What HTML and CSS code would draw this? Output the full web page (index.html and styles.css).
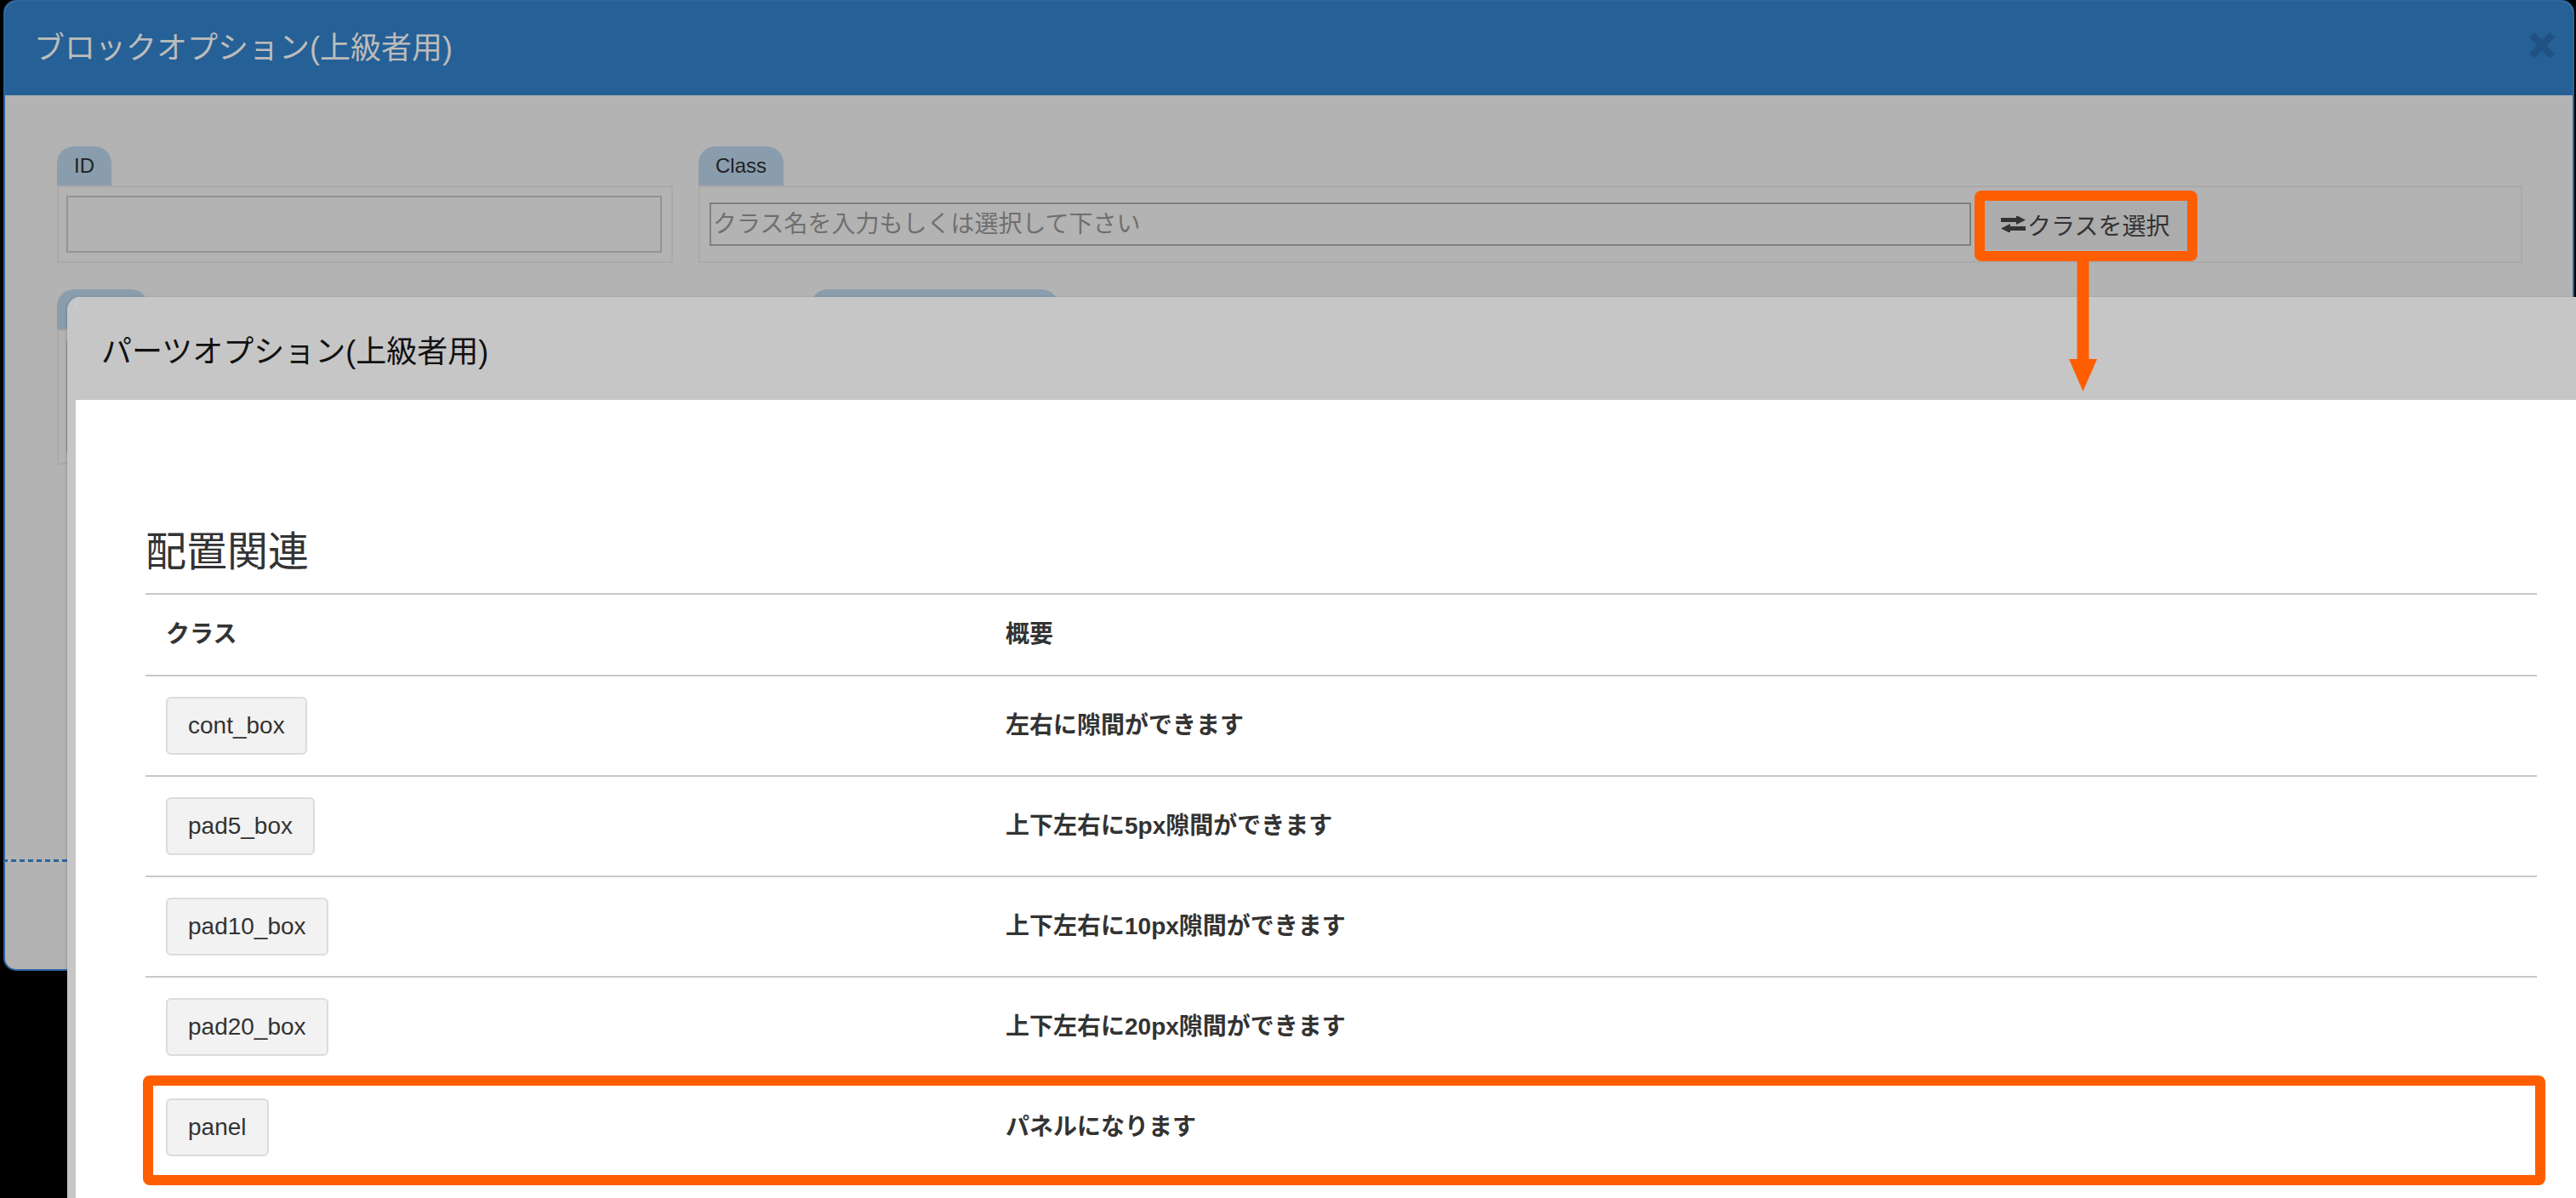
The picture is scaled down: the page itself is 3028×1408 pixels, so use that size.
FILE: index.html
```html
<!DOCTYPE html>
<html lang="ja">
<head>
    <meta charset="UTF-8">
    <meta name="viewport" content="width=device-width, initial-scale=1.0">
    <title>パーツオプション(上級者用)</title>
    <link rel="stylesheet" href="styles.css">
</head>
<body>

    <!-- Block option dialog (dimmed, behind) -->
    <div class="block-modal">
        <div class="block-modal-header">
            <h4 class="block-title">ブロックオプション(上級者用)</h4>
            <span class="close-btn">
                <svg width="32" height="33" viewBox="0 0 32 33">
                    <path d="M4 4 L28 29 M28 4 L4 29" stroke="#1f5283" stroke-width="8" fill="none"/>
                </svg>
            </span>
        </div>
        <div class="block-modal-body">
            <div class="field-row">
                <div class="field field-id">
                    <div class="field-tab">ID</div>
                    <div class="field-box">
                        <input type="text" class="text-input id-input">
                    </div>
                </div>
                <div class="field field-class">
                    <div class="field-tab">Class</div>
                    <div class="field-box">
                        <input type="text" class="text-input class-input" placeholder="クラス名を入力もしくは選択して下さい">
                        <button class="select-btn">
                            <svg width="29" height="19" viewBox="0 0 29 19">
                                <rect x="0" y="2" width="20" height="5" fill="#333"/>
                                <polygon points="18,-1 29,4.5 18,10" fill="#333"/>
                                <rect x="9" y="12" width="20" height="5" fill="#333"/>
                                <polygon points="11,9 0,14.5 11,20" fill="#333"/>
                            </svg>クラスを選択
                        </button>
                    </div>
                </div>
            </div>
            <div class="field-row row-2">
                <div class="field field-style">
                    <div class="field-tab tab-short"></div>
                    <div class="field-box tall-box">
                        <textarea class="text-input area-input"></textarea>
                    </div>
                </div>
                <div class="field field-attr">
                    <div class="field-tab tab-long"></div>
                    <div class="field-box tall-box"></div>
                </div>
            </div>
        </div>
        <div class="block-modal-footer"></div>
    </div>

    <!-- Parts option dialog (front) -->
    <div class="parts-modal">
        <div class="parts-modal-header">
            <h4 class="parts-title">パーツオプション(上級者用)</h4>
        </div>
        <div class="parts-modal-body">
            <h3 class="section-title">配置関連</h3>
            <table class="class-table">
                <colgroup>
                    <col class="col-class">
                    <col>
                </colgroup>
                <thead>
                    <tr><th>クラス</th><th>概要</th></tr>
                </thead>
                <tbody>
                    <tr><td><span class="class-tag">cont_box</span></td><td>左右に隙間ができます</td></tr>
                    <tr><td><span class="class-tag">pad5_box</span></td><td>上下左右に5px隙間ができます</td></tr>
                    <tr><td><span class="class-tag">pad10_box</span></td><td>上下左右に10px隙間ができます</td></tr>
                    <tr><td><span class="class-tag">pad20_box</span></td><td>上下左右に20px隙間ができます</td></tr>
                    <tr><td><span class="class-tag">panel</span></td><td>パネルになります</td></tr>
                </tbody>
            </table>
        </div>
    </div>

    <!-- annotation marks -->
    <div class="mark mark-btn"></div>
    <svg class="mark-arrow" width="33" height="153" viewBox="0 0 33 153">
        <rect x="9.5" y="0" width="14" height="118" fill="#ff5e00"/>
        <polygon points="0,115 33,115 16.5,153" fill="#ff5e00"/>
    </svg>
    <div class="mark mark-row"></div>

</body>
</html>
```

FILE: styles.css
```css
* {
    margin: 0;
    padding: 0;
    box-sizing: border-box;
}

body {
    width: 3028px;
    height: 1408px;
    overflow: hidden;
    position: relative;
    background: #000;
    font-family: "Liberation Sans", "Noto Sans CJK JP", sans-serif;
    font-size: 28px;
    line-height: 1.42857;
    color: #333;
}

/* ---- block option dialog ---- */
.block-modal {
    margin-left: 4px;
    width: 3022px;
    height: 1141px;
    border: 2px solid #2b64a0;
    border-radius: 15px;
    background: #b3b3b3;
    overflow: hidden;
    display: flex;
    flex-direction: column;
}

.block-modal-header {
    height: 110px;
    background: #256096;
    display: flex;
    justify-content: space-between;
    align-items: center;
    padding: 0 20px 0 34px;
}

.block-title {
    font-size: 36px;
    font-weight: normal;
    color: #bcbcbc;
}

.close-btn {
    display: flex;
    margin-top: -8px;
}

.block-modal-body {
    padding: 60px 59px 0 61px;
}

.field-row {
    display: flex;
    gap: 30px;
}

.row-2 {
    margin-top: 31px;
}

.field-tab {
    display: inline-block;
    height: 46px;
    padding: 0 20px;
    background: #8a9dad;
    border-radius: 20px 20px 0 0;
    font-size: 24px;
    line-height: 46px;
    color: #222;
    vertical-align: top;
}

.tab-short {
    width: 107px;
    height: 47px;
}

.tab-long {
    width: 291px;
    height: 47px;
}

.field-box {
    border: 2px solid #a9a9a9;
    height: 91px;
    padding: 10px 11px 10px 9px;
    display: flex;
    align-items: center;
}

.field-id {
    width: 724px;
}

.field-class {
    width: 2144px;
}

.field-class .field-box {
    padding-left: 11px;
}

.field-style {
    width: 856px;
}

.field-attr {
    width: 2012px;
}

.tall-box {
    height: 159px;
    align-items: stretch;
}

.text-input {
    font-family: "Liberation Sans", "Noto Sans CJK JP", sans-serif;
    font-size: 28px;
    color: #333;
    background: transparent;
    outline: none;
    border: 2px solid #939393;
    padding: 0 2px;
}

.id-input {
    width: 100%;
    height: 67px;
}

.class-input {
    width: 1483px;
    height: 51px;
    border-color: #7f7f7f;
}

.class-input::placeholder {
    color: #6f6f6f;
}

.area-input {
    width: 100%;
    resize: none;
    margin: 1px 0;
}

.select-btn {
    margin-left: 16px;
    width: 239px;
    height: 59px;
    border: none;
    background: #acacac;
    color: #333;
    font-family: "Noto Sans CJK JP", sans-serif;
    font-size: 28px;
    display: flex;
    align-items: center;
    padding-left: 19px;
    gap: 2px;
}

.block-modal-footer {
    margin-top: auto;
    height: 129px;
    border-top: 3px solid transparent;
    border-image: repeating-linear-gradient(90deg, #2b64a0 0 6px, transparent 6px 10px) 3;
}

/* ---- parts option dialog ---- */
.parts-modal {
    position: absolute;
    left: 79px;
    top: 349px;
    width: 2980px;
    height: 1100px;
    background: #fff;
    border-left: 10px solid #c6c6c6;
    border-radius: 15px 0 0 0;
    box-shadow: -1px 0 3px rgba(0, 0, 0, 0.15);
    overflow: hidden;
}

.parts-modal-header {
    height: 121px;
    background: #c6c6c6;
    padding: 9px 0 0 30px;
    display: flex;
    align-items: center;
}

.parts-title {
    font-size: 36px;
    font-weight: normal;
    color: #111;
}

.parts-modal-body {
    padding-left: 82px;
}

.section-title {
    width: 2811px;
    margin-top: 153px;
    padding-bottom: 21px;
    font-size: 48px;
    line-height: 1.1;
    font-weight: normal;
    color: #333;
    border-bottom: 2px solid #c8c8c8;
}

.class-table {
    width: 2811px;
    border-collapse: collapse;
    table-layout: fixed;
}

.col-class {
    width: 987px;
}

.class-table th {
    text-align: left;
    font-weight: bold;
    padding: 27px 24px;
    border-bottom: 2px solid #c8c8c8;
}

.class-table td {
    padding: 24px;
    font-weight: bold;
    vertical-align: middle;
    border-bottom: 2px solid #c8c8c8;
}

.class-tag {
    display: inline-block;
    padding: 12px 24px;
    line-height: 40px;
    background: #f2f2f2;
    border: 2px solid #dcdcdc;
    border-radius: 6px;
    font-weight: normal;
    color: #333;
}

/* ---- orange marks ---- */
.mark {
    position: absolute;
    border: 12px solid #ff5e00;
    border-radius: 8px;
}

.mark-btn {
    left: 2321px;
    top: 224px;
    width: 262px;
    height: 83px;
}

.mark-arrow {
    position: absolute;
    left: 2432px;
    top: 307px;
}

.mark-row {
    left: 168px;
    top: 1264px;
    width: 2824px;
    height: 129px;
}
```
